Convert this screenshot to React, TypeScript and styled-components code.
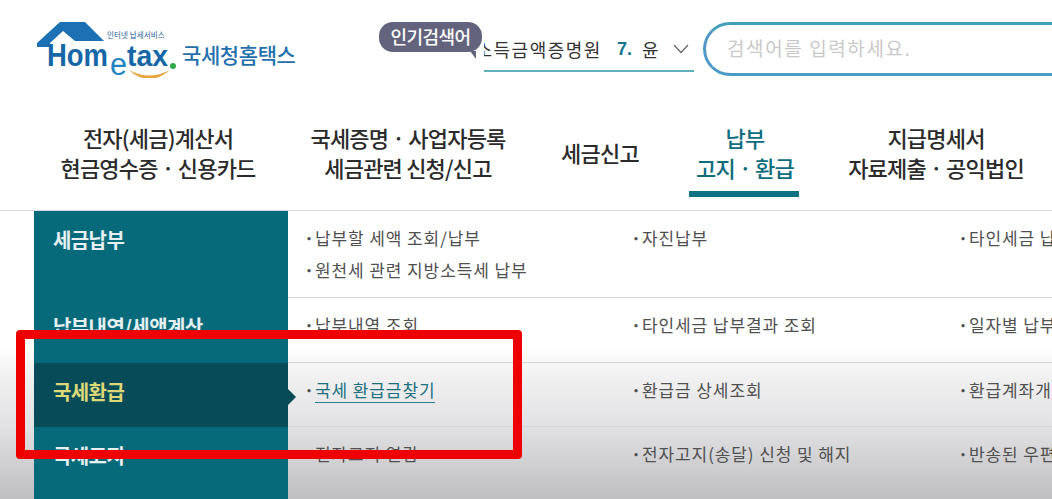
import React from "react";
import styled, { createGlobalStyle } from "styled-components";

const GlobalStyle = createGlobalStyle`
  html, body {
    margin: 0;
    padding: 0;
    background: #fff;
    overflow: hidden;
  }
  body {
    font-family: "Noto Sans CJK KR", "Noto Sans", sans-serif;
  }
`;

const Page = styled.div`
  position: relative;
  width: 1052px;
  height: 499px;
  overflow: hidden;
  background: linear-gradient(
    180deg,
    #ffffff 0,
    #ffffff 345px,
    #f1f1f2 375px,
    #e2e2e4 425px,
    #cfcfd1 465px,
    #bfbfc1 499px
  );
`;

const Header = styled.header`
  display: flex;
  align-items: flex-start;
  height: 100px;
  padding-top: 22px;
  box-sizing: border-box;
`;

const LogoLink = styled.a`
  display: block;
  width: 379px;
  height: 78px;
  flex: none;
  margin-top: -22px;
`;

const PopularBubble = styled.div`
  position: relative;
  flex: none;
  width: 103px;
  height: 30px;
  border-radius: 14px;
  background: #63637e;
  color: #fff;
  font-size: 18px;
  font-weight: 500;
  line-height: 28px;
  text-align: center;
  letter-spacing: -0.6px;

  &::after {
    content: "";
    position: absolute;
    right: 6px;
    bottom: -7px;
    border-top: 8px solid #63637e;
    border-left: 6px solid transparent;
  }
`;

const Ticker = styled.div`
  display: flex;
  align-items: center;
  justify-content: flex-end;
  flex: none;
  width: 210px;
  height: 44px;
  margin: 6px 0 0 2px;
  padding-right: 34px;
  box-sizing: border-box;
  border-bottom: 2px solid #5fb0b8;
  overflow: hidden;
  position: relative;
  white-space: nowrap;
  color: #333;
  font-size: 18px;
  letter-spacing: 1.5px;
  line-height: 40px;
`;

const TickerRank = styled.b`
  margin: 0 10px 0 15px;
  color: #14758a;
  font-family: "Liberation Sans", sans-serif;
  font-size: 18px;
  letter-spacing: 0;
`;

const TickerArrow = styled.svg`
  position: absolute;
  right: 5px;
  top: 16px;
`;

const SearchBox = styled.div`
  flex: none;
  width: 400px;
  height: 54px;
  margin-left: 9px;
  padding-left: 21px;
  box-sizing: border-box;
  border: 3px solid #4f98c8;
  border-top-color: #429fb8;
  border-bottom-color: #4a9cc4;
  border-right: 0;
  border-radius: 27px 0 0 27px;
  color: #c9c9c9;
  font-size: 19px;
  letter-spacing: 1.6px;
  line-height: 46px;
`;

const Nav = styled.nav`
  display: grid;
  grid-template-columns: 250px 250px 134px 156px 226px;
  height: 110px;
  margin-left: 33px;
  box-sizing: border-box;
`;

const NavItem = styled.a<{ $active?: boolean }>`
  display: flex;
  flex-direction: column;
  align-items: center;
  justify-content: center;
  height: 104px;
  color: ${(p) => (p.$active ? "#0d6d7c" : "#2b2b2b")};
  font-size: 22px;
  font-weight: 500;
  line-height: 30px;
  letter-spacing: -0.8px;
  white-space: nowrap;
`;

const NavLine = styled.span<{ $active?: boolean }>`
  position: relative;

  ${(p) =>
    p.$active &&
    `
    &::after {
      content: "";
      position: absolute;
      left: -7px;
      right: -5px;
      bottom: -15px;
      height: 6px;
      background: #0d7384;
    }
  `}
`;

const Menu = styled.div`
  border-top: 1px solid #d9d9dc;
`;

const MenuRow = styled.div<{ $height: number }>`
  display: grid;
  grid-template-columns: 254px repeat(3, 327px);
  height: ${(p) => p.$height}px;
  margin-left: 34px;
  box-sizing: border-box;
  position: relative;

  &::after {
    content: "";
    position: absolute;
    left: 254px;
    width: 800px;
    bottom: 0;
    height: 1px;
    background: #d4d4d8;
  }
`;

const SideTitle = styled.div<{ $active?: boolean }>`
  position: relative;
  padding: 14px 0 0 19px;
  background: ${(p) => (p.$active ? "#074b59" : "#066a7a")};
  color: ${(p) => (p.$active ? "#dcd878" : "#e6f0f2")};
  font-size: 20px;
  font-weight: 700;
  line-height: 30px;
  letter-spacing: -0.6px;
  white-space: nowrap;

  ${(p) =>
    p.$active &&
    `
    &::after {
      content: "";
      position: absolute;
      right: -8px;
      top: 26px;
      border-left: 8px solid #074b59;
      border-top: 8px solid transparent;
      border-bottom: 8px solid transparent;
    }
  `}
`;

const LinkColumn = styled.ul`
  display: flex;
  flex-direction: column;
  gap: 2px;
  margin: 0;
  padding: 12px 0 0 16px;
  list-style: none;
  white-space: nowrap;
`;

const LinkItem = styled.li`
  color: #505050;
  font-size: 17px;
  line-height: 30px;
  letter-spacing: 0.9px;

  &::before {
    content: "·";
    font-weight: 700;
  }
`;

const ActiveLink = styled.a`
  color: #1b6f7e;
  border-bottom: 1px solid #2b7f8e;
`;

const Highlight = styled.div`
  position: absolute;
  left: 16px;
  top: 330px;
  width: 506px;
  height: 129px;
  box-sizing: border-box;
  border: 9px solid #ee0000;
  border-radius: 4px;
`;

const rows = [
  {
    title: "세금납부",
    height: 87,
    columns: [["납부할 세액 조회/납부", "원천세 관련 지방소득세 납부"], ["자진납부"], ["타인세금 납부"]],
  },
  {
    title: "납부내역/세액계산",
    height: 65,
    columns: [["납부내역 조회"], ["타인세금 납부결과 조회"], ["일자별 납부내역"]],
  },
  {
    title: "국세환급",
    height: 64,
    active: true,
    columns: [["국세 환급금찾기"], ["환급금 상세조회"], ["환급계좌개설"]],
  },
  {
    title: "국세고지",
    height: 80,
    columns: [["전자고지 열람"], ["전자고지(송달) 신청 및 해지"], ["반송된 우편물"]],
  },
];

const Logo = () => (
  <svg width="379" height="78" viewBox="0 0 379 78">
    <path
      d="M37 43 L60 22 H85 L104 41 H75 L63 31 L50 43 V47 H37 Z"
      fill="#1c70b4"
    />
    <text
      x="47"
      y="66"
      fontFamily="Liberation Sans, sans-serif"
      fontWeight="700"
      fontSize="32"
      textLength="61"
      lengthAdjust="spacingAndGlyphs"
      fill="#1667a8"
    >
      Hom
    </text>
    <text
      x="110"
      y="75"
      fontFamily="Liberation Sans, sans-serif"
      fontWeight="400"
      fontSize="31"
      textLength="17"
      lengthAdjust="spacingAndGlyphs"
      fill="#2384c4"
    >
      e
    </text>
    <text
      x="127"
      y="66"
      fontFamily="Liberation Sans, sans-serif"
      fontWeight="700"
      fontSize="30"
      textLength="41"
      lengthAdjust="spacingAndGlyphs"
      fill="#1667a8"
    >
      tax
    </text>
    <circle cx="173" cy="66" r="3" fill="#2eaa4a" />
    <path d="M129 70 Q149 88 170 70 Q149 81 129 70 Z" fill="#e8a33a" />
    <text
      x="107"
      y="38"
      fontFamily="Noto Sans CJK KR, sans-serif"
      fontSize="7.5"
      letterSpacing="0.1"
      fill="#2a5f95"
    >
      인터넷 납세서비스
    </text>
    <text
      x="182"
      y="63"
      fontFamily="Noto Sans CJK KR, sans-serif"
      fontWeight="500"
      fontSize="21"
      letterSpacing="-0.4"
      fill="#1f70ad"
    >
      국세청홈택스
    </text>
  </svg>
);

export default function App() {
  return (
    <Page>
      <GlobalStyle />
      <Header>
        <LogoLink>
          <Logo />
        </LogoLink>
        <PopularBubble>인기검색어</PopularBubble>
        <Ticker>
          소득금액증명원
          <TickerRank>7.</TickerRank>윤
          <TickerArrow width="16" height="10" viewBox="0 0 16 10">
            <path d="M1 1 L8 8.5 L15 1" fill="none" stroke="#666" strokeWidth="1.2" />
          </TickerArrow>
        </Ticker>
        <SearchBox>검색어를 입력하세요.</SearchBox>
      </Header>
      <Nav>
        <NavItem>
          <span>전자(세금)계산서</span>
          <span>현금영수증 · 신용카드</span>
        </NavItem>
        <NavItem>
          <span>국세증명 · 사업자등록</span>
          <span>세금관련 신청/신고</span>
        </NavItem>
        <NavItem>
          <span>세금신고</span>
        </NavItem>
        <NavItem $active>
          <span>납부</span>
          <NavLine $active>고지 · 환급</NavLine>
        </NavItem>
        <NavItem>
          <span>지급명세서</span>
          <span>자료제출 · 공익법인</span>
        </NavItem>
      </Nav>
      <Menu>
        {rows.map((row) => (
          <MenuRow key={row.title} $height={row.height}>
            <SideTitle $active={row.active}>{row.title}</SideTitle>
            {row.columns.map((links, i) => (
              <LinkColumn key={i}>
                {links.map((link) => (
                  <LinkItem key={link}>
                    {row.active && i === 0 ? <ActiveLink>{link}</ActiveLink> : link}
                  </LinkItem>
                ))}
              </LinkColumn>
            ))}
          </MenuRow>
        ))}
      </Menu>
      <Highlight />
    </Page>
  );
}
